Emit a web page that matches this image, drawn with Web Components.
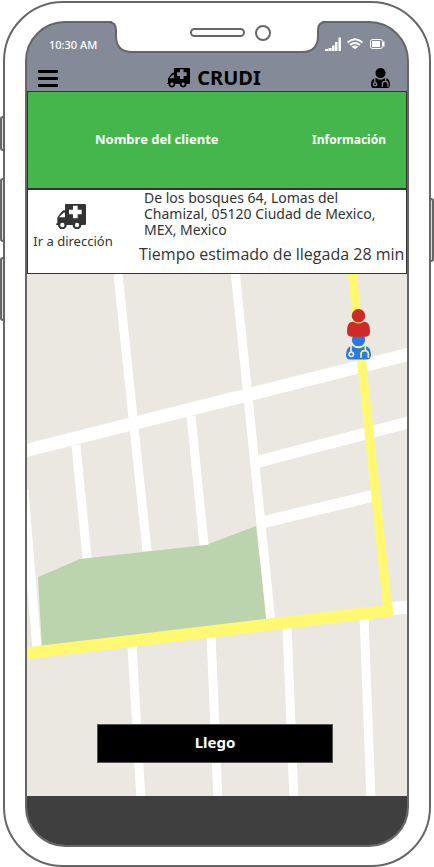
<!DOCTYPE html>
<html lang="es">
<head>
<meta charset="utf-8">
<meta name="viewport" content="width=device-width, initial-scale=1">
<title>CRUDI</title>
<style>
  body { margin: 0; background: #fff; color: #333; font-family: "Noto Sans", "Open Sans", sans-serif; }
</style>
</head>
<body>
<phone-frame>
  <status-bar time="10:30 AM"></status-bar>
  <app-header name="CRUDI"></app-header>
  <trip-card>
    <span slot="client">Nombre del cliente</span>
    <span slot="action">Información</span>
    <span slot="go">Ir a dirección</span>
    <span slot="address">De los bosques 64, Lomas del Chamizal, 05120 Ciudad de Mexico, MEX, Mexico</span>
    <span slot="eta">Tiempo estimado de llegada 28 min</span>
  </trip-card>
  <route-map>Llego</route-map>
</phone-frame>

<script>
const define = (name, html, setup) => {
  const template = document.createElement('template');
  template.innerHTML = html;
  customElements.define(name, class extends HTMLElement {
    constructor() {
      super();
      this.attachShadow({ mode: 'open' }).append(template.content.cloneNode(true));
    }
    connectedCallback() { if (setup) setup(this, this.shadowRoot); }
  });
};

define('icon-ambulance', `
<style>
  :host { display: block; }
  svg { display: block; width: 100%; height: auto; }
</style>
<svg viewBox="0 0 90 76" fill="currentColor" fill-rule="evenodd" aria-hidden="true">
  <path d="M30 0H86Q90 0 90 4V59Q90 63 86 63H76A13 13 0 0 1 50 63H32A13 13 0 0 1 6 63H2Q0 63 0 60Q0 58 4 58V43Q4 39 7 36L17 23Q20 19 25 19H27V3Q27 0 30 0Z
    M27 26H23L10 38V40H27Z
    M51 5V17H39V31H51V43H65V31H77V17H65V5Z
    M19 56.500A6.500 6.500 0 1 0 19 69.500A6.500 6.500 0 1 0 19 56.500Z
    M63 56.500A6.500 6.500 0 1 0 63 69.500A6.500 6.500 0 1 0 63 56.500Z"/>
</svg>`);

define('icon-doctor', `
<style>
  :host { display: block; }
  svg { display: block; width: 100%; height: auto; }
</style>
<svg viewBox="0 0 75 80" aria-hidden="true">
  <mask id="m">
    <rect width="75" height="80" fill="#fff"/>
    <g fill="none" stroke="#000" stroke-width="5">
      <path d="M15 38V58M58 38V54M45 74V64Q45 53 56 53Q67 53 67 64V74"/>
    </g>
    <circle cx="16" cy="64" r="9"/>
    <circle cx="16" cy="64" r="4" fill="#fff"/>
  </mask>
  <circle cx="37.500" cy="20" r="20" fill="currentColor"/>
  <path mask="url(#m)" fill="currentColor" d="M19 39Q0 41 0 66Q0 80 14 80H61Q75 80 75 66Q75 41 56 39Q38 53 19 39Z"/>
</svg>`);

define('icon-person', `
<style>
  :host { display: block; }
  svg { display: block; width: 100%; height: auto; }
</style>
<svg viewBox="0 0 68 82" fill="currentColor" aria-hidden="true">
  <circle cx="34" cy="20" r="20"/>
  <path d="M18 38Q34 48 50 38Q68 38 68 66Q68 82 55 82H13Q0 82 0 66Q0 38 18 38Z"/>
</svg>`);

define('phone-frame', `
<style>
  :host { display: flex; box-sizing: border-box; min-height: 100vh; padding: 1px 3px 0; }
  .body { position: relative; box-sizing: border-box; flex: 1; display: flex; border: 2px solid #666; border-radius: 60px; padding: 18px 20px; background: #fff; }
  .screen { box-sizing: border-box; flex: 1; min-width: 0; display: flex; flex-direction: column; overflow: hidden; border: 2px solid #666; border-radius: 40px; background: #848a97; }
  .home { flex: none; height: 49px; background: #3f3f3f; }
  .notch { position: absolute; top: 18px; left: 50%; width: 218px; margin-left: -109px; }
  .key { position: absolute; box-sizing: border-box; width: 5px; height: 64px; border: 2px solid #666; background: #ddd; }
  .left { left: -5px; border-radius: 3px 0 0 3px; }
  .right { right: -5px; border-radius: 0 3px 3px 0; }
  .mute { top: 113px; height: 35px; }
  .up { top: 175px; }
  .down { top: 254px; }
  .power { top: 195px; }
</style>
<div class="body">
  <i class="key left mute"></i><i class="key left up"></i><i class="key left down"></i><i class="key right power"></i>
  <div class="screen">
    <slot></slot>
    <div class="home"></div>
  </div>
  <svg class="notch" viewBox="0 0 218 33" aria-hidden="true">
    <path fill="#fff" d="M4 0H214V3H4Z"/>
    <path fill="#fff" stroke="#666" stroke-width="2" d="M0 1Q8 1 8 9V15Q8 31 24 31H194Q210 31 210 15V9Q210 1 218 1"/>
    <rect x="83" y="8" width="53" height="7" rx="3.500" fill="#fff" stroke="#666" stroke-width="2"/>
    <circle cx="155" cy="12" r="7" fill="#fff" stroke="#666" stroke-width="2"/>
  </svg>
</div>`);

define('status-bar', `
<style>
  :host { display: flex; align-items: center; justify-content: space-between; height: 42px; padding: 0 22px; color: #fff; font-size: 11px; font-weight: 500; }
  svg { width: 60px; height: 16px; }
</style>
<time></time>
<svg viewBox="0 0 60 16" role="img" aria-label="Señal, wifi, batería">
  <path fill="#fff" d="M0 13h3v2H0zM3.500 12h3v3h-3zM7 9.500h2.500V15H7zM10 6h2.500v9H10zM13.500 1.500H16V15h-2.500z"/>
  <g fill="none" stroke="#fff" stroke-width="2">
    <path d="M22.500 6.500Q30 0 37.500 6.500M25 9Q30 5 35 9M27.500 11.500Q30 9.500 32.500 11.500"/>
    <rect x="45.500" y="3.500" width="12" height="9" rx="2" stroke-width="1"/>
  </g>
  <path fill="#fff" d="M28.500 11.500h3L30 13.500zM47 5h8v6h-8zM58 5.500h1.500v5H58z"/>
</svg>`, (el, root) => { root.querySelector('time').textContent = el.getAttribute('time'); });

define('app-header', `
<style>
  :host { display: grid; grid-template-columns: 1fr auto 1fr; align-items: center; height: 26px; padding: 0 17px 0 11px; color: #000; }
  button { padding: 0; border: 0; background: none; color: inherit; cursor: pointer; }
  .menu { justify-self: start; display: grid; gap: 4px; width: 20px; }
  .menu i { height: 3px; border-radius: 1px; background: #000; }
  .user { justify-self: end; width: 19px; }
  h1 { display: flex; align-items: center; gap: 7px; margin: 0; font-size: 20px; line-height: 26px; font-weight: 700; }
  icon-ambulance { width: 23px; }
</style>
<button class="menu" aria-label="Menú"><i></i><i></i><i></i></button>
<h1><icon-ambulance></icon-ambulance><span></span></h1>
<button class="user" aria-label="Perfil"><icon-doctor></icon-doctor></button>`,
(el, root) => { root.querySelector('h1 span').textContent = el.getAttribute('name'); });

define('trip-card', `
<style>
  :host { display: block; border: 1px solid #333; background: #fff; color: #333; font-size: 13px; }
  button { padding: 0; border: 0; background: none; color: inherit; font: inherit; cursor: pointer; }
  header { display: flex; align-items: center; justify-content: space-between; box-sizing: border-box; height: 98px; padding: 0 20px 2px 67px; border-bottom: 2px solid #333; background: #44b64b; color: #fff; font-weight: 700; }
  h2 { margin: 0; font-size: 13px; }
  header button { font-size: 12px; }
  .trip { display: grid; grid-template-columns: 82px 1fr; gap: 25px; min-height: 83px; padding: 0 0 0 4px; }
  .go { display: grid; justify-items: center; align-content: start; gap: 3px; padding-top: 14px; line-height: 18px; white-space: nowrap; }
  icon-ambulance { width: 30px; margin-right: 4px; }
  p { margin: 0; }
  .address { padding: 0 30px 0 5px; font-size: 14px; line-height: 16px; }
  .eta { padding-top: 6px; font-family: "Open Sans", sans-serif; font-size: 16px; line-height: 20px; white-space: nowrap; }
</style>
<header><h2><slot name="client"></slot></h2><button><slot name="action"></slot></button></header>
<div class="trip">
  <button class="go"><icon-ambulance></icon-ambulance><slot name="go"></slot></button>
  <div>
    <p class="address"><slot name="address"></slot></p>
    <p class="eta"><slot name="eta"></slot></p>
  </div>
</div>`);

define('route-map', `
<style>
  :host { flex: 1; display: grid; min-height: 500px; position: relative; background: #ebe8e1; }
  svg { position: absolute; width: 100%; height: 100%; }
  .arrive { position: relative; place-self: end center; width: 62%; height: 39px; margin: 0 4px 33px 0; padding: 0 0 4px; border: 1px solid #555; background: #000; color: #fff; font: inherit; font-size: 15px; font-weight: 700; cursor: pointer; }
  .pin { position: absolute; left: 87%; }
  icon-person { top: 35px; width: 23px; margin-left: -11px; color: #cf2a27; }
  icon-doctor { top: 59px; width: 25px; margin-left: -12px; color: #2b78e4; }
</style>
<svg viewBox="27 274 380 522" preserveAspectRatio="none" aria-hidden="true">
  <path fill="#bcd4ad" d="M38 577L80 559L206 545L256 526L267 620L42 648Z"/>
  <g fill="none" stroke="#fff" stroke-width="9">
    <path d="M24 490L37 650M118 274L147 551M235 270L271 622M76 445L87 558M191 416L204 545"/>
    <path d="M132 646L141 800M211 635L218 800M287 626L294 800M364 616L371 800"/>
    <path stroke-width="13" d="M20 452L414 353M388 609L410 607"/>
    <path stroke-width="12" d="M257 462L410 422M264 522L372 496"/>
  </g>
  <path fill="none" stroke="#fff870" stroke-width="12" d="M20 654L393 610"/>
  <path fill="none" stroke="#fff870" stroke-width="9" d="M352 270L388 612"/>
</svg>
<icon-doctor class="pin"></icon-doctor>
<icon-person class="pin"></icon-person>
<button class="arrive"><slot></slot></button>`);
</script>
</body>
</html>
